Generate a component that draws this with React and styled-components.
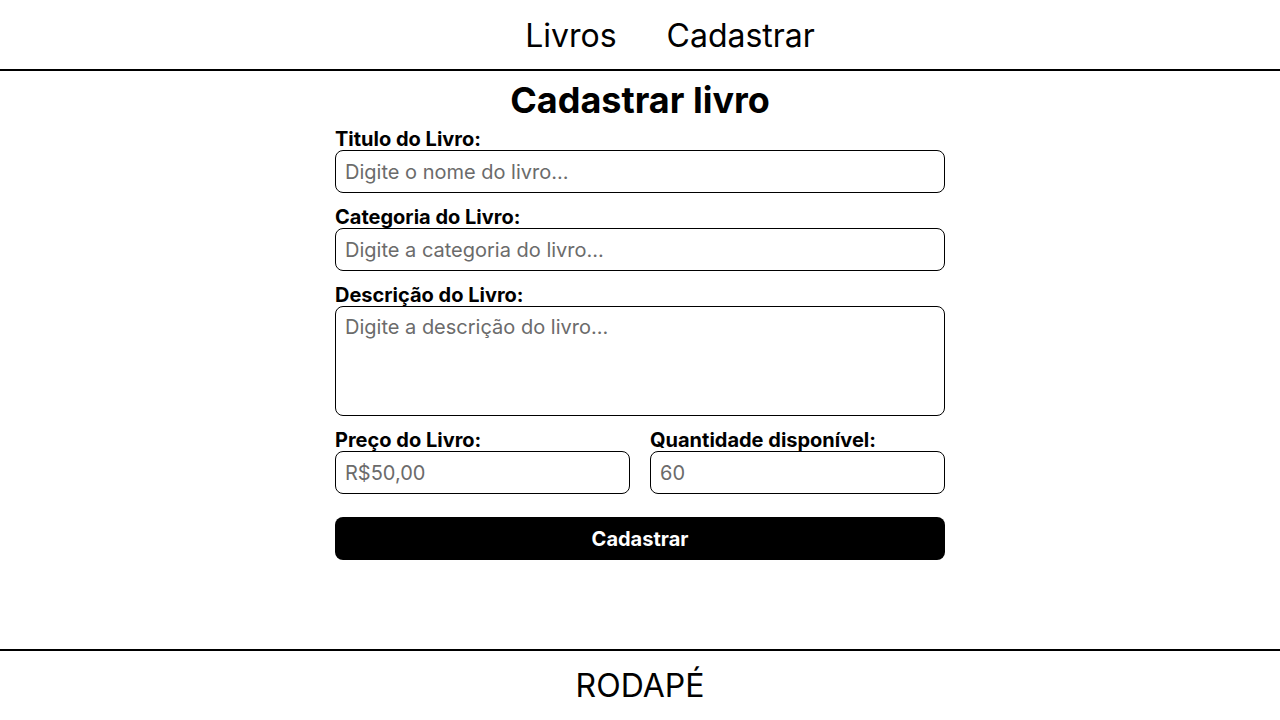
import React from 'react';
import styled, { createGlobalStyle } from 'styled-components';

const GlobalStyle = createGlobalStyle`
  * { box-sizing: border-box; }
  body {
    margin: 0;
    font-family: Inter, 'Liberation Sans', sans-serif;
    color: #000;
    background: #fff;
  }
`;

const Page = styled.div`
  min-height: 100vh;
  display: flex;
  flex-direction: column;
`;

const Header = styled.header`
  height: 71px;
  border-bottom: 2px solid #000;
  display: flex;
  justify-content: center;
  align-items: center;
  gap: 50px;
  padding: 2px 0 0 60px;
`;

const NavLink = styled.a`
  font-size: 32px;
  font-weight: 400;
  color: #000;
  text-decoration: none;
  cursor: pointer;
`;

const Main = styled.main`
  flex: 1;
  display: flex;
  flex-direction: column;
  align-items: center;
`;

const Title = styled.h1`
  font-size: 36px;
  font-weight: 700;
  margin: 7px 0 0;
  line-height: 44px;
  text-align: center;
`;

const Form = styled.form`
  width: 610px;
  display: flex;
  flex-direction: column;
  gap: 13px;
  margin-top: 6px;
`;

const Field = styled.div`
  display: flex;
  flex-direction: column;
  flex: 1;
`;

const Row = styled.div`
  display: flex;
  gap: 20px;
`;

const Label = styled.label`
  font-size: 20px;
  font-weight: 700;
  line-height: 22px;
`;

const Input = styled.input`
  height: 43px;
  width: 100%;
  border: 1px solid #000;
  border-radius: 8px;
  padding: 0 9px;
  font-size: 20px;
  font-family: Inter, 'Liberation Sans', sans-serif;
  outline: none;
  &::placeholder {
    color: #6b6b6b;
  }
`;

const TextArea = styled.textarea`
  height: 110px;
  width: 100%;
  border: 1px solid #000;
  border-radius: 8px;
  padding: 8px 9px;
  font-size: 20px;
  font-family: Inter, 'Liberation Sans', sans-serif;
  resize: none;
  outline: none;
  &::placeholder {
    color: #6b6b6b;
  }
`;

const Button = styled.button`
  margin-top: 10px;
  height: 43px;
  border: none;
  border-radius: 8px;
  background: #000;
  color: #fff;
  font-size: 20px;
  font-weight: 700;
  font-family: Inter, 'Liberation Sans', sans-serif;
  cursor: pointer;
`;

const Footer = styled.footer`
  height: 71px;
  border-top: 2px solid #000;
  display: flex;
  justify-content: center;
  align-items: center;
  font-size: 32px;
`;

const App = () => {
  const onSubmit = e => {
    e.preventDefault();
  };

  return (
    <Page>
      <GlobalStyle />
      <Header>
        <NavLink>Livros</NavLink>
        <NavLink>Cadastrar</NavLink>
      </Header>
      <Main>
        <Title>Cadastrar livro</Title>
        <Form onSubmit={onSubmit}>
          <Field>
            <Label>Titulo do Livro:</Label>
            <Input type="text" placeholder="Digite o nome do livro..." />
          </Field>
          <Field>
            <Label>Categoria do Livro:</Label>
            <Input type="text" placeholder="Digite a categoria do livro..." />
          </Field>
          <Field>
            <Label>Descrição do Livro:</Label>
            <TextArea placeholder="Digite a descrição do livro..." />
          </Field>
          <Row>
            <Field>
              <Label>Preço do Livro:</Label>
              <Input type="text" placeholder="R$50,00" />
            </Field>
            <Field>
              <Label>Quantidade disponível:</Label>
              <Input type="text" placeholder="60" />
            </Field>
          </Row>
          <Button type="submit">Cadastrar</Button>
        </Form>
      </Main>
      <Footer>RODAPÉ</Footer>
    </Page>
  );
};

export default App;
